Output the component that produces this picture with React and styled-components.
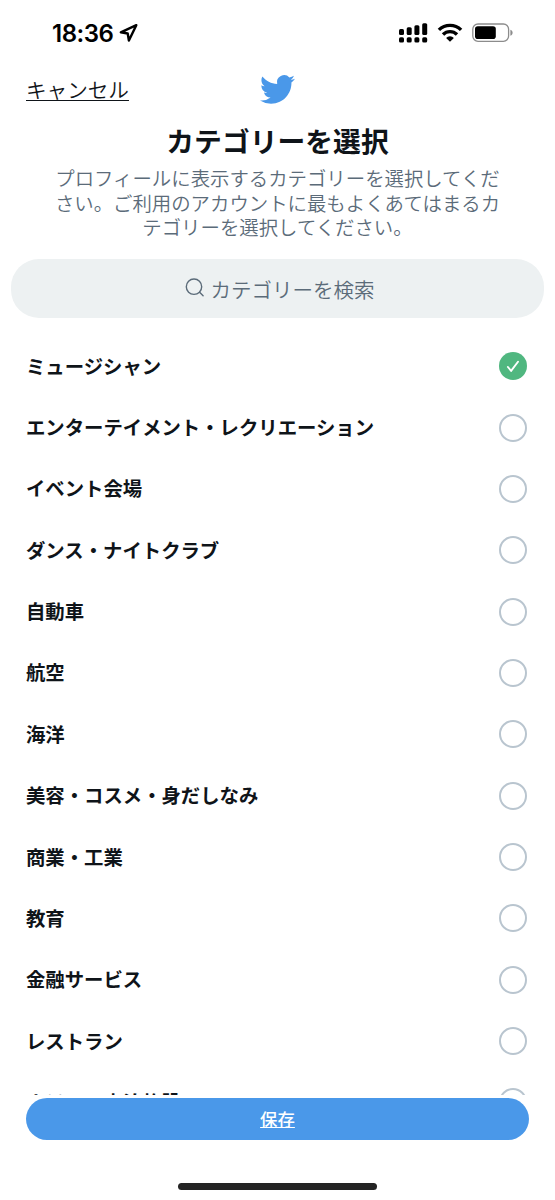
import React, { useState } from "react"
import styled, { createGlobalStyle } from "styled-components"

const GlobalStyle = createGlobalStyle`
  * {
    box-sizing: border-box;
  }
  body {
    margin: 0;
    background: #fff;
    color: #0f1419;
    font-family: "Noto Sans CJK JP", "Liberation Sans", sans-serif;
  }
  button {
    padding: 0;
    border: 0;
    background: none;
    color: inherit;
    font-family: inherit;
  }
`

const Screen = styled.div`
  display: flex;
  flex-direction: column;
  width: 555px;
  height: 1200px;
  overflow: hidden;
  background: #fff;
`

const StatusBar = styled.div`
  display: flex;
  justify-content: space-between;
  align-items: center;
  flex: none;
  height: 66px;
  padding: 0 42px 0 52px;
  color: #000;
`

const StatusGroup = styled.div`
  display: flex;
  align-items: center;
  column-gap: ${(props) => props.gap}px;
`

const Time = styled.span`
  padding-top: 1px;
  font-family: Inter, sans-serif;
  font-size: 24px;
  font-weight: 600;
  line-height: 28px;
  letter-spacing: -0.5px;
`

const Header = styled.header`
  display: grid;
  grid-template-columns: 1fr auto 1fr;
  align-items: center;
  flex: none;
  height: 47px;
  padding: 0 27px 1px 26px;
`

const CancelButton = styled.button`
  justify-self: start;
  font-size: 20.6px;
  font-weight: 350;
  line-height: 30px;
  text-decoration: underline;
  text-decoration-thickness: 1.3px;
  text-underline-offset: 1.5px;
  text-decoration-skip-ink: none;
`

const Title = styled.h1`
  flex: none;
  margin: 9px 0 0;
  font-size: 27.8px;
  font-weight: 700;
  line-height: 36px;
  text-align: center;
`

const Description = styled.p`
  flex: none;
  width: 450px;
  margin: 8px auto 0;
  color: #5b6b79;
  font-size: 19.4px;
  font-weight: 350;
  line-height: 24.5px;
  text-align: center;
  word-break: break-all;
`

const SearchBox = styled.div`
  display: flex;
  justify-content: center;
  align-items: center;
  column-gap: 6px;
  flex: none;
  height: 59px;
  margin: 19px 11px 0;
  padding-left: 4px;
  border-radius: 28px;
  background: #edf1f2;
  color: #5b6b79;
  font-size: 20.5px;
  font-weight: 350;
  line-height: 30px;

  > span {
    padding-top: 1px;
  }
`

const CategoryList = styled.ul`
  flex: none;
  height: 759.5px;
  margin: 18px 0 0;
  padding: 0 28px 0 26px;
  overflow: hidden;
  list-style: none;
`

const CategoryRow = styled.li`
  display: flex;
  justify-content: space-between;
  align-items: center;
  height: 61.36px;
  font-size: 19.38px;
  font-weight: 700;
  line-height: 28px;

  > span {
    padding-bottom: 1px;
  }
`

const Radio = styled.button`
  display: flex;
  justify-content: center;
  align-items: center;
  width: 28px;
  height: 28px;
  border: ${(props) => (props.$checked ? "none" : "2px solid #b9c5cf")};
  border-radius: 50%;
  background: ${(props) => (props.$checked ? "#50b780" : "transparent")};
`

const SaveButton = styled.button`
  flex: none;
  height: 42.5px;
  margin: 2.5px 26px 0;
  border-radius: 22px;
  background: #4a98e9;
  color: #fff;
  font-size: 17.4px;
  font-weight: 500;
  line-height: 26px;
  text-decoration: underline;
  text-decoration-thickness: 1.2px;
  text-underline-offset: 1px;
  text-decoration-skip-ink: none;
`

const HomeIndicator = styled.div`
  flex: none;
  width: 199px;
  height: 6.5px;
  margin: 43px auto 0;
  border-radius: 4px;
  background: #242424;
`

const categories = [
  "ミュージシャン",
  "エンターテイメント・レクリエーション",
  "イベント会場",
  "ダンス・ナイトクラブ",
  "自動車",
  "航空",
  "海洋",
  "美容・コスメ・身だしなみ",
  "商業・工業",
  "教育",
  "金融サービス",
  "レストラン",
  "ホテル・宿泊施設",
]

const LocationIcon = () => (
  <svg width="20" height="20" viewBox="0 0 20 20" fill="none" stroke="currentColor" strokeWidth="2.4" strokeLinejoin="round">
    <path d="M18.3 2.2 2.8 9.3l6.900 1.200 1.200 7z" />
  </svg>
)

const SignalIcon = () => (
  <svg width="29" height="20" viewBox="0 0 29 20" fill="currentColor">
    <rect x="0" y="6" width="5" height="6" rx="1.5" />
    <rect x="7.7" y="4.3" width="5" height="7.7" rx="1.5" />
    <rect x="15.4" y="2.3" width="5" height="9.7" rx="1.5" />
    <rect x="23.2" y="0.2" width="5" height="11.8" rx="1.5" />
    {[0, 7.7, 15.4, 23.2].map((x) => (
      <rect key={x} x={x} y="14.3" width="5" height="5.2" rx="1.6" />
    ))}
  </svg>
)

const WifiIcon = () => (
  <svg width="26" height="20" viewBox="0 0 26 20" fill="none" stroke="currentColor" strokeWidth="3.4">
    <path d="M1.9 6.9a16 16 0 0 1 22.2 0" />
    <path d="M6 11.5a10 10 0 0 1 14 0" />
    <path d="M13 18.7 9.1 14.9a5.4 5.4 0 0 1 7.8 0z" fill="currentColor" stroke="none" />
  </svg>
)

const BatteryIcon = () => (
  <svg width="41" height="20" viewBox="0 0 41 20">
    <rect x="0.8" y="1" width="35.8" height="17.3" rx="5.2" fill="none" stroke="#8c8c8c" strokeWidth="1.3" />
    <rect x="3" y="3.3" width="20.8" height="12.8" rx="2.8" fill="#000" />
    <path d="M38.4 6.7c1.5.6 2.2 1.6 2.2 3s-.7 2.4-2.2 3z" fill="#8c8c8c" />
  </svg>
)

const TwitterLogo = () => (
  <svg width="35" height="35" viewBox="0 0 24 24" fill="#4a98e9">
    <path d="M23.953 4.57a10 10 0 01-2.825.775 4.958 4.958 0 002.163-2.723c-.951.555-2.005.959-3.127 1.184a4.92 4.92 0 00-8.384 4.482C7.69 8.095 4.067 6.13 1.64 3.162a4.822 4.822 0 00-.666 2.475c0 1.71.87 3.213 2.188 4.096a4.904 4.904 0 01-2.228-.616v.06a4.923 4.923 0 003.946 4.827 4.996 4.996 0 01-2.212.085 4.936 4.936 0 004.604 3.417 9.867 9.867 0 01-6.102 2.105c-.39 0-.779-.023-1.17-.067a13.995 13.995 0 007.557 2.209c9.053 0 13.998-7.496 13.998-13.985 0-.21 0-.42-.015-.63A9.935 9.935 0 0024 4.59z" />
  </svg>
)

const SearchIcon = () => (
  <svg width="20" height="20" viewBox="0 0 20 20" fill="none" stroke="currentColor" strokeWidth="1.4" strokeLinecap="round">
    <circle cx="9" cy="8.7" r="7.7" />
    <path d="m14.6 14.3 3.5 3.5" />
  </svg>
)

const CheckIcon = () => (
  <svg width="14" height="14" viewBox="0 0 14 14" fill="none" stroke="#fff" strokeWidth="1.9" strokeLinecap="round" strokeLinejoin="round">
    <path d="m1.9 8 3.2 3.9L12 2.8" />
  </svg>
)

const App = () => {
  const [selected, setSelected] = useState(0)

  return (
    <Screen>
      <GlobalStyle />
      <StatusBar>
        <StatusGroup gap={5}>
          <Time>18:36</Time>
          <LocationIcon />
        </StatusGroup>
        <StatusGroup gap={9}>
          <SignalIcon />
          <WifiIcon />
          <BatteryIcon />
        </StatusGroup>
      </StatusBar>
      <Header>
        <CancelButton>キャンセル</CancelButton>
        <TwitterLogo />
      </Header>
      <Title>カテゴリーを選択</Title>
      <Description>
        プロフィールに表示するカテゴリーを選択してください。ご利用のアカウントに最もよくあてはまるカテゴリーを選択してください。
      </Description>
      <SearchBox>
        <SearchIcon />
        <span>カテゴリーを検索</span>
      </SearchBox>
      <CategoryList>
        {categories.map((name, index) => (
          <CategoryRow key={name}>
            <span>{name}</span>
            <Radio $checked={selected === index} onClick={() => setSelected(index)}>
              {selected === index && <CheckIcon />}
            </Radio>
          </CategoryRow>
        ))}
      </CategoryList>
      <SaveButton>保存</SaveButton>
      <HomeIndicator />
    </Screen>
  )
}

export default App
